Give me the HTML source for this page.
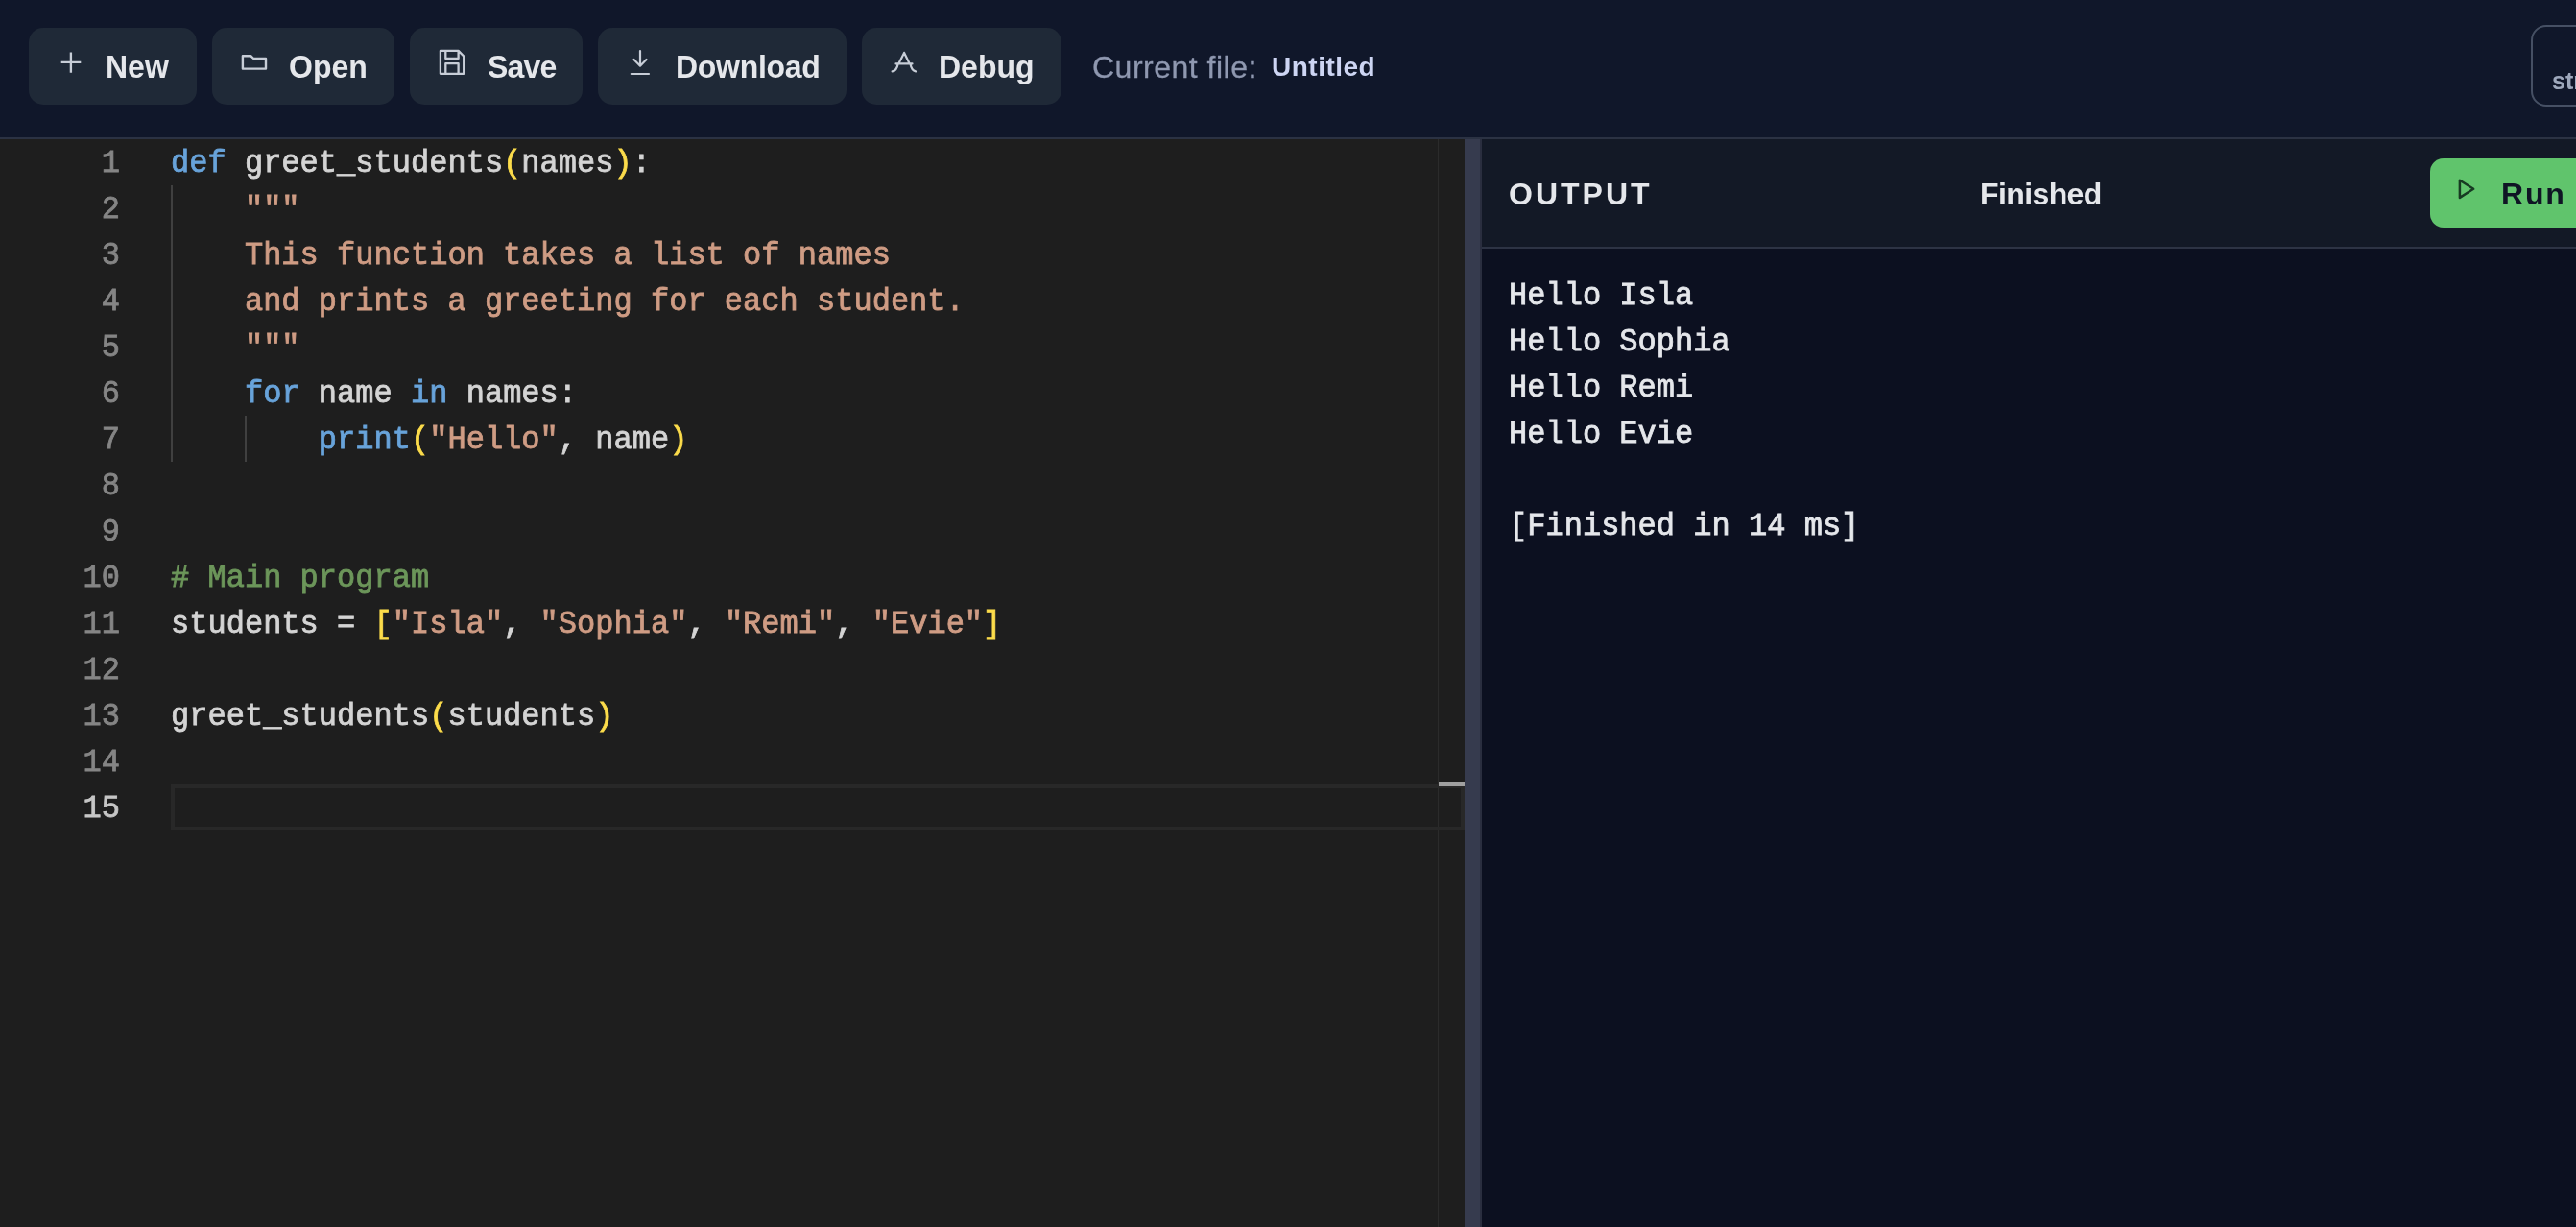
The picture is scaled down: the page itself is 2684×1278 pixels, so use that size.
<!DOCTYPE html>
<html><head><meta charset="utf-8">
<style>
*{margin:0;padding:0;box-sizing:border-box}
html,body{-webkit-font-smoothing:antialiased;width:2684px;height:1278px;overflow:hidden;background:#0f172a;font-family:"Liberation Sans",sans-serif}
.abs{position:absolute}
#hdr{left:0;top:0;width:2684px;height:143px;background:#10172a}
#hdrb{left:0;top:143px;width:2684px;height:2px;background:#2b3243}
.btn{position:absolute;top:29px;height:80px;background:#1f2937;border-radius:15px}
.bt{position:absolute;will-change:transform;transform-origin:0 27px;font-weight:bold;font-size:32px;line-height:32px;color:#e5e7eb;white-space:pre}
.ico{position:absolute;left:0;top:0}
#editor{left:0;top:145px;width:1526px;height:1133px;background:#1e1e1e;overflow:hidden}
.ln{position:absolute;-webkit-text-stroke:0.8px currentColor;will-change:transform;left:0;width:125px;transform-origin:0 32px;transform:scaleY(1.05);text-align:right;font-family:"Liberation Mono",monospace;font-size:32px;line-height:48px;color:#858585;white-space:pre}
.cl{position:absolute;letter-spacing:0.025px;-webkit-text-stroke:0.8px currentColor;will-change:transform;left:178px;transform-origin:0 32px;transform:scaleY(1.05);font-family:"Liberation Mono",monospace;font-size:32px;line-height:48px;color:#d4d4d4;white-space:pre}
.k{color:#68a3da}.s{color:#cf9c84}.c{color:#6c965a}.b{color:#fcdc4b}
.guide{position:absolute;width:2px;background:#404040}
#out{left:1544px;top:145px;width:1140px;height:1133px;background:#0c1020}
#outh{left:1544px;top:145px;width:1140px;height:112px;background:#131926}
#outhb{left:1544px;top:257px;width:1140px;height:2px;background:#2d3344}
.ol{position:absolute;letter-spacing:0.025px;-webkit-text-stroke:0.8px currentColor;will-change:transform;left:1571.5px;transform-origin:0 32px;transform:scaleY(1.05);font-family:"Liberation Mono",monospace;font-size:32px;line-height:48px;color:#e5e7eb;white-space:pre}
</style></head><body>
<div id="hdr" class="abs"></div>
<div id="hdrb" class="abs"></div>

<!-- buttons -->
<div class="btn" style="left:30px;width:175px"></div>
<div class="btn" style="left:221px;width:190px"></div>
<div class="btn" style="left:427px;width:180px"></div>
<div class="btn" style="left:623px;width:259px"></div>
<div class="btn" style="left:898px;width:208px"></div>

<svg class="abs" style="left:0;top:0" width="1120" height="140" viewBox="0 0 1120 140" fill="none" stroke="#c7cdd7" stroke-width="2.3" stroke-linejoin="round">
  <path d="M73.9 54.4 V75.7 M63.7 64.9 H84.3" stroke-width="2.35"/>
  <path d="M252.9 58.3 H261.5 L264.2 61 H277 V71.6 H252.9 Z" stroke-width="2.4"/>
  <path d="M458.9 52.9 H477.6 L483.2 58.5 V76.8 H458.9 Z M464.3 52.9 V60.9 H477.6 V52.9 M464.3 76.8 V66.2 H477.6 V76.8" stroke-width="2.3"/>
  <path d="M667 53 V68.5 M660.5 62 L667 68.7 L673.5 62 M657.8 77 H676" stroke-width="2.2" stroke-linecap="round"/>
  <path d="M942.1 55 L936.5 66 M942.1 55 L947.5 66 M933.5 66.4 H950.5 M935.5 67 Q934.5 73.5 929.6 74.4 M948.6 67 Q949.8 73.5 954 74.4" stroke-width="2.2" stroke-linecap="round"/>
</svg>

<div class="bt" style="left:110px;top:54px;transform:scaleY(1.05)">New</div>
<div class="bt" style="left:301px;top:54px;transform:scaleY(1.05)">Open</div>
<div class="bt" style="left:507.5px;top:54px;letter-spacing:-0.8px;transform:scaleY(1.05)">Save</div>
<div class="bt" style="left:704px;top:54px;letter-spacing:-0.3px;transform:scaleY(1.05)">Download</div>
<div class="bt" style="left:978px;top:54px;transform:scaleY(1.05)">Debug</div>
<div class="abs" style="left:1138px;top:54px;font-size:32px;line-height:32px;color:#8f98b0;white-space:pre;letter-spacing:0.5px;-webkit-text-stroke:0.3px currentColor;will-change:transform">Current file:</div>
<div class="abs" style="left:1325px;top:56px;font-size:28px;line-height:28px;font-weight:bold;color:#cdd5f3;white-space:pre;letter-spacing:0.5px;will-change:transform">Untitled</div>

<div class="abs" style="left:2637px;top:26px;width:120px;height:85px;border:2px solid #465064;border-radius:16px"></div>
<div class="abs" style="left:2659px;top:72px;font-size:25px;line-height:25px;font-weight:bold;color:#9ea8bc;white-space:pre;will-change:transform">str</div>

<!-- editor -->
<div id="editor" class="abs">
  <div class="abs" style="left:1498px;top:0;width:1px;height:1133px;background:#2b2b2b"></div>
  <div class="abs" style="left:178px;top:672px;width:1348px;height:48px;border:4px solid #282828"></div>
  <div class="abs" style="left:1499px;top:670px;width:27px;height:4px;background:#a0a0a0"></div>
  <div class="guide" style="left:178px;top:48px;height:288px"></div>
  <div class="guide" style="left:255px;top:288px;height:48px"></div>
  <div class="ln" style="top:2px">1</div>
  <div class="ln" style="top:50px">2</div>
  <div class="ln" style="top:98px">3</div>
  <div class="ln" style="top:146px">4</div>
  <div class="ln" style="top:194px">5</div>
  <div class="ln" style="top:242px">6</div>
  <div class="ln" style="top:290px">7</div>
  <div class="ln" style="top:338px">8</div>
  <div class="ln" style="top:386px">9</div>
  <div class="ln" style="top:434px">10</div>
  <div class="ln" style="top:482px">11</div>
  <div class="ln" style="top:530px">12</div>
  <div class="ln" style="top:578px">13</div>
  <div class="ln" style="top:626px">14</div>
  <div class="ln" style="top:674px;color:#c6c6c6">15</div>

  <div class="cl" style="top:2px"><span class="k">def</span> greet_students<span class="b">(</span>names<span class="b">)</span>:</div>
  <div class="cl" style="top:50px"><span class="s">    """</span></div>
  <div class="cl" style="top:98px"><span class="s">    This function takes a list of names</span></div>
  <div class="cl" style="top:146px"><span class="s">    and prints a greeting for each student.</span></div>
  <div class="cl" style="top:194px"><span class="s">    """</span></div>
  <div class="cl" style="top:242px">    <span class="k">for</span> name <span class="k">in</span> names:</div>
  <div class="cl" style="top:290px">        <span class="k">print</span><span class="b">(</span><span class="s">"Hello"</span>, name<span class="b">)</span></div>
  <div class="cl" style="top:434px"><span class="c"># Main program</span></div>
  <div class="cl" style="top:482px">students = <span class="b">[</span><span class="s">"Isla"</span>, <span class="s">"Sophia"</span>, <span class="s">"Remi"</span>, <span class="s">"Evie"</span><span class="b">]</span></div>
  <div class="cl" style="top:578px">greet_students<span class="b">(</span>students<span class="b">)</span></div>
</div>

<!-- splitter -->
<div class="abs" style="left:1526px;top:145px;width:16px;height:1133px;background:#363b4e"></div>
<div class="abs" style="left:1542px;top:145px;width:2px;height:1133px;background:#2a2e3f"></div>

<!-- output -->
<div id="out" class="abs"></div>
<div id="outh" class="abs"></div>
<div id="outhb" class="abs"></div>
<div class="bt" style="left:1572px;top:186px;letter-spacing:3px">OUTPUT</div>
<div class="bt" style="left:2063px;top:186px;letter-spacing:-0.6px">Finished</div>
<div class="abs" style="left:2532px;top:165px;width:200px;height:72px;background:#60c46c;border-radius:14px"></div>
<svg class="abs" style="left:2550px;top:175px" width="40" height="40" viewBox="0 0 40 40" fill="none" stroke="#173a22" stroke-width="2.5" stroke-linejoin="round">
  <path d="M12.9 12.7 V30.9 L27.2 21.8 Z"/>
</svg>
<div class="bt" style="left:2605.5px;top:186px;color:#0f1524;letter-spacing:1.8px">Run</div>

<div class="ol" style="top:285px">Hello Isla</div>
<div class="ol" style="top:333px">Hello Sophia</div>
<div class="ol" style="top:381px">Hello Remi</div>
<div class="ol" style="top:429px">Hello Evie</div>
<div class="ol" style="top:525px">[Finished in 14 ms]</div>
</body></html>
